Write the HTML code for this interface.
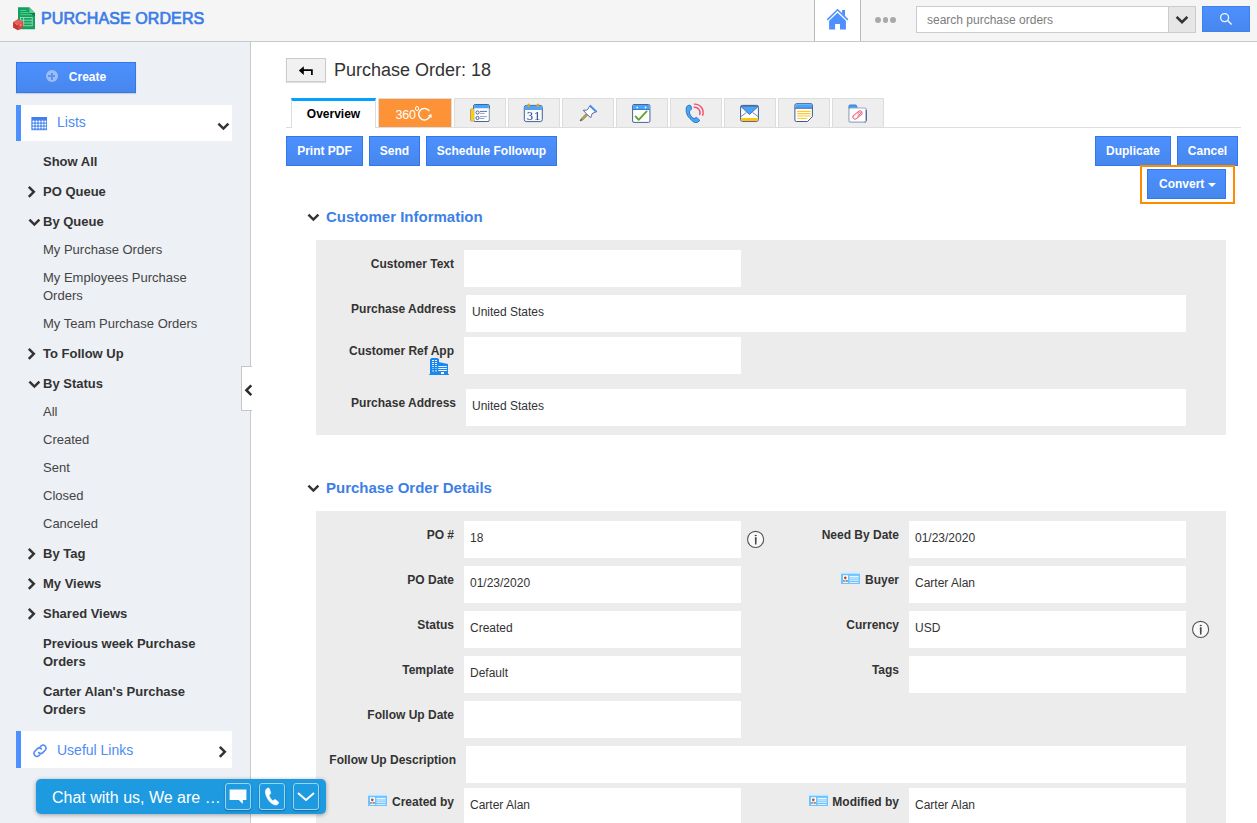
<!DOCTYPE html>
<html><head><meta charset="utf-8"><title>Purchase Orders</title>
<style>
*{box-sizing:border-box;margin:0;padding:0}
html,body{width:1257px;height:823px;overflow:hidden;background:#fff}
body{font-family:"Liberation Sans",sans-serif;font-size:13px;color:#333;position:relative}
.abs{position:absolute}
#hdr{position:absolute;left:0;top:0;width:1257px;height:42px;background:#f5f5f5;border-bottom:1px solid #c8c8c8}
#side{position:absolute;left:0;top:42px;width:251px;height:781px;background:#edf0f5;border-right:1px solid #c9c9c9}
.btn{position:absolute;height:30px;line-height:28px;color:#fff;font-weight:bold;font-size:12px;text-align:center;background:linear-gradient(#4d90fe,#4787ed);border:1px solid #3079ed;white-space:nowrap}
.nav{position:absolute;left:43px;margin-top:1px;font-size:13px;line-height:18px;color:#444;white-space:nowrap}
.nav.b{font-weight:bold;color:#333}
.panel{position:absolute;left:16px;width:216px;height:36px;background:#fff;border-left:5px solid #4d90fe}
.tab{position:absolute;top:99px;height:29px;width:51px;background:#eee;border:1px solid #ddd;border-bottom:none}
.sec{position:absolute;left:326px;font-size:15px;font-weight:bold;color:#3d7fe6;line-height:18px;white-space:nowrap}
.grey{position:absolute;left:316px;width:910px;background:#ececec}
.inp{position:absolute;background:#fff;height:37px;font-size:12px;color:#333;line-height:14px;padding:10px 0 0 6px;white-space:nowrap}
.lbl{position:absolute;font-size:12px;font-weight:bold;color:#333;text-align:right;line-height:14px;white-space:nowrap}
</style></head><body>
<div id="hdr">
<svg class="abs" style="left:12px;top:6px" width="25" height="26" viewBox="0 0 25 26">
<path d="M6 1.2h11.3l5.7 5.7v16.3H6z" fill="#12a05c"/>
<path d="M17.3 1.2l5.7 5.7h-5.7z" fill="#5fcb9a"/>
<path d="M17.3 6.9h5.7v3.2z" fill="#0b7a45"/>
<path d="M8.3 4.5h6.2M8.3 6.6h8.3M8.3 8.7h11.6" stroke="#5ccf9a" stroke-width="0.9" fill="none"/>
<rect x="8.4" y="11.4" width="11.8" height="8.4" fill="none" stroke="#a9e6c8" stroke-width="0.8"/>
<path d="M8.4 14.2h11.8M8.4 17h11.8M11.6 11.4v8.4" stroke="#a9e6c8" stroke-width="0.8" fill="none"/>
<path d="M1.2 16.200l5-3.200 5 3.200v5.200l-5 2.800-5-2.800z" fill="#d9453d"/>
<path d="M1.2 16.2l5 2.6 5-2.6-5-3.2z" fill="#e3615a"/>
<path d="M6.200 18.800v5.400l-5-2.800v-5.200z" fill="#c8372f"/>
<path d="M3.2 17.4l2.6 1.6M8 18.4l.6 1.6.8-2.2" stroke="#f3b5b1" stroke-width="0.7" fill="none"/>
</svg>
<div class="abs" style="left:41px;top:9px;font-size:16px;line-height:20px;color:#3b7de8;-webkit-text-stroke:0.7px #3b7de8;letter-spacing:0.1px;white-space:nowrap">PURCHASE ORDERS</div>
<div class="abs" style="left:814px;top:0;width:47px;height:41px;background:#fff;border-left:1px solid #bbb;border-right:1px solid #bbb"></div>
<svg class="abs" style="left:826px;top:8px" width="24" height="23" viewBox="0 0 24 23"><path d="M11.560 0.700L22.400 11.300 21.300 12.400 11.560 2.800 1.800 12.400 0.700 11.300z" fill="#4d90fe"/><path d="M16.100 2.100h2.900v6.300l-2.900-2.900z" fill="#4d90fe"/><path d="M3.100 12.700L11.560 4.800 19.900 12.700V21.500H14V15.900H9.100V21.500H3.100z" fill="#4d90fe"/></svg>
<div class="abs" style="left:875.100px;top:17.300px;width:5.500px;height:5.500px;border-radius:3px;background:#a9a9a9"></div>
<div class="abs" style="left:882.600px;top:17.300px;width:5.500px;height:5.500px;border-radius:3px;background:#a9a9a9"></div>
<div class="abs" style="left:890.300px;top:17.300px;width:5.500px;height:5.500px;border-radius:3px;background:#a9a9a9"></div>
<div class="abs" style="left:916px;top:6px;width:253px;height:27px;background:#fff;border:1px solid #ccc;font-size:12px;line-height:27px;color:#7d7d7d;padding-left:10px">search purchase orders</div>
<div class="abs" style="left:1168px;top:6px;width:28px;height:27px;background:#e6e6e6;border:1px solid #ccc"></div>
<svg class="abs" style="left:1175px;top:15px" width="14" height="10" viewBox="0 0 14 10"><path d="M1.6 1.8L7 7.2l5.4-5.4" fill="none" stroke="#333" stroke-width="2.6"/></svg>
<div class="abs" style="left:1202px;top:6px;width:48px;height:26px;background:linear-gradient(#4d90fe,#4787ed);border:1px solid #3f82ee"></div>
<svg class="abs" style="left:1219px;top:12px" width="14" height="14" viewBox="0 0 14 14"><circle cx="5.6" cy="5.6" r="4" fill="none" stroke="#fff" stroke-width="1.3" opacity="0.92"/><path d="M8.6 8.6l4 4" stroke="#fff" stroke-width="1.4" opacity="0.92"/></svg>
</div>
<div id="side">
<div class="btn" style="left:16px;top:20px;width:120px;height:31px;line-height:29px;box-shadow:0 1px 1px rgba(0,0,0,.12)"><span style="display:inline-block;width:12px;height:12px;border-radius:6px;background:#9dbdf7;vertical-align:-1px;margin-right:11px;position:relative"><i style="position:absolute;left:2.500px;top:5px;width:7px;height:2px;background:#5a93f3"></i><i style="position:absolute;left:5px;top:2.500px;width:2px;height:7px;background:#5a93f3"></i></span>Create</div>
<div class="panel" style="top:63px"></div>
<svg class="abs" style="left:31px;top:75px" width="16" height="14" viewBox="0 0 16 14"><rect x="0.400" y="0" width="15.600" height="13.200" fill="#3f80ea"/><rect x="0.900" y="2.800" width="14.600" height="9.900" fill="#5a92ef"/><g stroke="#8db4f5" stroke-width="0.700" fill="none"><path d="M0.900 4.6h14.600" /><path d="M0.900 7.6h14.600" /><path d="M0.900 10.6h14.600" /><path d="M2.5 3v9.500"/><path d="M5.5 3v9.500"/><path d="M8.5 3v9.500"/><path d="M11.5 3v9.500"/><path d="M14.3 3v9.500"/></g><g fill="#fff"><circle cx="2.5" cy="4.6" r="0.950"/><circle cx="5.5" cy="4.6" r="0.950"/><circle cx="8.5" cy="4.6" r="0.950"/><circle cx="11.5" cy="4.6" r="0.950"/><circle cx="14.3" cy="4.6" r="0.950"/><circle cx="2.5" cy="7.6" r="0.950"/><circle cx="5.5" cy="7.6" r="0.950"/><circle cx="8.5" cy="7.6" r="0.950"/><circle cx="11.5" cy="7.6" r="0.950"/><circle cx="14.3" cy="7.6" r="0.950"/><circle cx="2.5" cy="10.6" r="0.950"/><circle cx="5.5" cy="10.6" r="0.950"/><circle cx="8.5" cy="10.6" r="0.950"/><circle cx="11.5" cy="10.6" r="0.950"/><circle cx="14.3" cy="10.6" r="0.950"/></g></svg>
<div class="abs" style="left:57px;top:71px;font-size:14px;line-height:18px;color:#4d8bf5">Lists</div>
<svg class="abs" style="left:217px;top:80px" width="13" height="10" viewBox="0 0 13 10"><path d="M1.4 1.6L6.4 6.6 11.4 1.6" fill="none" stroke="#333" stroke-width="2.5"/></svg>
<div class="nav b" style="top:110px">Show All</div>
<div class="nav b" style="top:140px">PO Queue</div>
<svg class="abs" style="left:27px;top:143px" width="10" height="14" viewBox="0 0 10 14"><path d="M1.8 1.8L6.8 6.8 1.8 11.8" fill="none" stroke="#333" stroke-width="2.5"/></svg>
<div class="nav b" style="top:170px">By Queue</div>
<svg class="abs" style="left:28px;top:176px" width="13" height="10" viewBox="0 0 13 10"><path d="M1.4 1.6L6.4 6.6 11.4 1.6" fill="none" stroke="#333" stroke-width="2.5"/></svg>
<div class="nav" style="top:198px">My Purchase Orders</div>
<div class="nav" style="top:226px">My Employees Purchase<br>Orders</div>
<div class="nav" style="top:272px">My Team Purchase Orders</div>
<div class="nav b" style="top:302px">To Follow Up</div>
<svg class="abs" style="left:27px;top:305px" width="10" height="14" viewBox="0 0 10 14"><path d="M1.8 1.8L6.8 6.8 1.8 11.8" fill="none" stroke="#333" stroke-width="2.5"/></svg>
<div class="nav b" style="top:332px">By Status</div>
<svg class="abs" style="left:28px;top:338px" width="13" height="10" viewBox="0 0 13 10"><path d="M1.4 1.6L6.4 6.6 11.4 1.6" fill="none" stroke="#333" stroke-width="2.5"/></svg>
<div class="nav" style="top:360px">All</div>
<div class="nav" style="top:388px">Created</div>
<div class="nav" style="top:416px">Sent</div>
<div class="nav" style="top:444px">Closed</div>
<div class="nav" style="top:472px">Canceled</div>
<div class="nav b" style="top:502px">By Tag</div>
<svg class="abs" style="left:27px;top:505px" width="10" height="14" viewBox="0 0 10 14"><path d="M1.8 1.8L6.8 6.8 1.8 11.8" fill="none" stroke="#333" stroke-width="2.5"/></svg>
<div class="nav b" style="top:532px">My Views</div>
<svg class="abs" style="left:27px;top:535px" width="10" height="14" viewBox="0 0 10 14"><path d="M1.8 1.8L6.8 6.8 1.8 11.8" fill="none" stroke="#333" stroke-width="2.5"/></svg>
<div class="nav b" style="top:562px">Shared Views</div>
<svg class="abs" style="left:27px;top:565px" width="10" height="14" viewBox="0 0 10 14"><path d="M1.8 1.8L6.8 6.8 1.8 11.8" fill="none" stroke="#333" stroke-width="2.5"/></svg>
<div class="nav b" style="top:592px">Previous week Purchase<br>Orders</div>
<div class="nav b" style="top:640px">Carter Alan's Purchase<br>Orders</div>
<div class="panel" style="top:689px;height:37px"></div>
<svg class="abs" style="left:32px;top:701px" width="16" height="15" viewBox="0 0 16 15"><g fill="none" stroke="#4d8bf5" stroke-width="1.5" stroke-linecap="round"><path d="M6.6 9.6a3 3 0 0 0 4.2 0l2.6-2.6a3 3 0 0 0-4.2-4.2l-1 1"/><path d="M9.4 5.9a3 3 0 0 0-4.2 0L2.6 8.5a3 3 0 0 0 4.2 4.2l1-1"/></g></svg>
<div class="abs" style="left:57px;top:699px;font-size:14px;line-height:18px;color:#4d8bf5">Useful Links</div>
<svg class="abs" style="left:218px;top:703px" width="10" height="14" viewBox="0 0 10 14"><path d="M1.8 1.8L6.8 6.8 1.8 11.8" fill="none" stroke="#333" stroke-width="2.5"/></svg>
</div>
<div id="main">
<div class="abs" style="left:286px;top:58px;width:40px;height:24px;background:#f1f1f1;border:1px solid #ccc;box-shadow:0 1px 1px rgba(0,0,0,.12)"></div>
<svg class="abs" style="left:298px;top:64px" width="16" height="13" viewBox="0 0 16 13"><path d="M4.500 6.200h9.400v4.800" fill="none" stroke="#000" stroke-width="1.700"/><path d="M5.800 2.200L0.800 6.600 5.800 11z" fill="#000"/></svg>
<div class="abs" style="left:334px;top:59px;font-size:18px;line-height:22px;color:#333;white-space:nowrap">Purchase Order: 18</div>
<div class="abs" style="left:286px;top:127px;width:955px;height:1px;background:#ddd"></div>
<div class="abs" style="left:291px;top:98px;width:85px;height:30px;background:#fff;border:1px solid #ddd;border-top:3px solid #02a3fe;border-bottom:none;font-size:12px;font-weight:bold;color:#000;text-align:center;line-height:27px">Overview</div>
<div class="abs" style="left:378px;top:98px;width:74px;height:29px;background:#fd9336;border:1px solid #ddd;border-bottom:none"></div>
<div class="abs" style="left:395.500px;top:107px;font-size:12.500px;line-height:16px;color:#fff;letter-spacing:-0.250px">360</div>
<div class="abs" style="left:414.500px;top:106.400px;width:4.200px;height:4.200px;border:1.100px solid #fff;border-radius:2.100px"></div>
<svg class="abs" style="left:418px;top:107px" width="16" height="15" viewBox="0 0 16 15"><path d="M11.420 4.130A5.800 5.800 0 1 0 12.170 8.400" fill="none" stroke="#fff" stroke-width="1.450"/><path d="M9.900 8.500L13.500 7.100 13.800 10.900z" fill="#fff"/></svg>
<div class="tab" style="left:454px;top:98px;width:52px;height:29px"></div>
<svg class="abs" style="left:470px;top:103px" width="21" height="20" viewBox="0 0 21 20"><rect x="3.600" y="1.500" width="15.800" height="17" rx="1.500" fill="#fff" stroke="#4a6296" stroke-width="1"/><path d="M19.400 5.500v12" stroke="#9aa9c4" stroke-width="1"/><path d="M4.100 3a1 1 0 0 1 1-1h12.800a1 1 0 0 1 1 1v2.200H4.100z" fill="#45a5fc"/><rect x="0.500" y="5.900" width="3.300" height="12.200" rx="0.900" fill="#ffcc0d" stroke="#4a6296" stroke-width="0.500"/><rect x="0.900" y="6.100" width="3.100" height="11.800" rx="0.700" fill="#ffcc0d"/><circle cx="7.500" cy="9.500" r="1.600" fill="#fff" stroke="#4a6296" stroke-width="1"/><circle cx="7.500" cy="15" r="1.600" fill="#fff" stroke="#4a6296" stroke-width="1"/><path d="M9.900 8.400h7.100" stroke="#4a6296" stroke-width="0.900"/><path d="M9.900 10.400h4.700M9.900 13.600h7.100M9.900 15.500h4.400" stroke="#8a9bbd" stroke-width="0.900"/></svg>
<div class="tab" style="left:508px;top:98px;width:52px;height:29px"></div>
<svg class="abs" style="left:523px;top:103px;will-change:transform" width="21" height="20" viewBox="0 0 21 20"><rect x="1.300" y="2.400" width="18" height="16.200" rx="2" fill="#f6f8fb" stroke="#41619e" stroke-width="1"/><path d="M1.800 4.400a1.600 1.600 0 0 1 1.600-1.600h13.800a1.600 1.600 0 0 1 1.600 1.600v2.600h-17z" fill="#4da3f7"/><ellipse cx="5.700" cy="2.400" rx="1.300" ry="1.900" fill="#d9a520"/><ellipse cx="14.900" cy="2.400" rx="1.300" ry="1.900" fill="#d9a520"/><text x="11.200" y="16.500" text-anchor="middle" font-family="Liberation Serif" font-size="12" fill="#344f8c" stroke="#344f8c" stroke-width="0.150" letter-spacing="1.300">31</text></svg>
<div class="tab" style="left:562px;top:98px;width:52px;height:29px"></div>
<svg class="abs" style="left:579px;top:104px" width="20" height="19" viewBox="0 0 20 19"><path d="M1 17l1.400-2.600 5.400-5.400 1.500 1.500-5.500 5.400z" fill="#d9a520" stroke="#3f5b94" stroke-width="0.600" stroke-linejoin="round"/><path d="M1 17l1.100-2 .9.900z" fill="#2f4577"/><path d="M11.400 1.200L17.900 7.500 15.200 8.600 13 9.700 12.700 11.200 11.750 13.700 8.900 11.200 7.300 9.600 4.200 6.300 7.600 6.100 9.200 4.850 9.850 3.300z" fill="#fff" stroke="#3f5b94" stroke-width="0.900" stroke-linejoin="round"/><path d="M11.400 1.500L17.400 7.300 16 7.900 10.700 2.700z" fill="#2f8ef5"/></svg>
<div class="tab" style="left:616px;top:98px;width:52px;height:29px"></div>
<svg class="abs" style="left:631px;top:103px" width="21" height="21" viewBox="0 0 21 21"><rect x="1.600" y="1.500" width="17.300" height="17.900" rx="1.400" fill="#fff" stroke="#4a6296" stroke-width="1"/><path d="M18.900 7.500v10.500" stroke="#9aa9c4" stroke-width="1"/><path d="M2.100 3a1 1 0 0 1 1-1h14.300a1 1 0 0 1 1 1v3.300H2.100z" fill="#45a5fc"/><path d="M1.600 6.500h17.300" stroke="#2f6fb8" stroke-width="0.900"/><circle cx="6.200" cy="4.400" r="0.850" fill="#fff"/><circle cx="14.500" cy="4.400" r="0.850" fill="#fff"/><path d="M4.600 13.400L7.700 16.800 15.600 8.400" fill="none" stroke="#5aa82a" stroke-width="1.900" stroke-linecap="round" stroke-linejoin="round"/></svg>
<div class="tab" style="left:670px;top:98px;width:52px;height:29px"></div>
<svg class="abs" style="left:682px;top:100px" width="28" height="26" viewBox="0 0 28 26"><path d="M7.300 5.200C5.600 5.400 4.400 6.600 4.300 8c-.3 1.600-.2 3.200.1 4.600.4 1.600 1 3 1.900 4.150 1 1.300 2 2.400 3.200 3.450 1 .8 1.900 1.600 2.800 2.200h3.200l2.400-2-3.400-3-2.500 1.200c-.8-.4-1.600-.9-2.200-1.500-1-1.100-1.800-2.400-2.200-3.800-.1-.8-.2-1.500-.2-2.200l2.100-1.900-.3-2.900c-.4-.8-1-1.100-1.900-1.100z" fill="#40a8ff" stroke="#2c5c9e" stroke-width="0.800" stroke-linejoin="round"/><path d="M11.660 7.280A5.400 5.400 0 0 1 17.500 14.900" fill="none" stroke="#f0506e" stroke-width="1.400"/><path d="M11.860 4.130A8.500 8.500 0 0 1 20.500 15.800" fill="none" stroke="#f0506e" stroke-width="1.400"/></svg>
<div class="tab" style="left:724px;top:98px;width:52px;height:29px"></div>
<svg class="abs" style="left:739px;top:104px" width="21" height="19" viewBox="0 0 21 19"><rect x="1.600" y="1.400" width="17.800" height="16" rx="1.800" fill="#fff" stroke="#3a5a92" stroke-width="1"/><rect x="2.100" y="13.900" width="16.800" height="3" rx="0.800" fill="#ffc60a"/><path d="M7.400 8.600L1.900 12.500M13.600 8.600L19.100 12.500" stroke="#4a6aa0" stroke-width="0.800"/><path d="M1.800 2.400h17.400L10.500 10.500z" fill="#45a5fc" stroke="#3a5a92" stroke-width="0.800" stroke-linejoin="round"/></svg>
<div class="tab" style="left:778px;top:98px;width:52px;height:29px"></div>
<svg class="abs" style="left:794px;top:102px" width="20" height="21" viewBox="0 0 20 21"><path d="M0.900 3.200a1.500 1.500 0 0 1 1.500-1.500h14.500a1.500 1.500 0 0 1 1.500 1.500V14.600L13.500 19.500H2.400a1.500 1.500 0 0 1-1.500-1.500z" fill="#fff" stroke="#3a5a92" stroke-width="1"/><path d="M1.400 3.200a1 1 0 0 1 1-1h14.500a1 1 0 0 1 1 1V6H1.400z" fill="#45a5fc"/><path d="M1 6.300h17.300" stroke="#3a5a92" stroke-width="0.900"/><path d="M3.100 9.400h13.600M3.100 11.600h13.600" stroke="#ffc933" stroke-width="1.100"/><path d="M3.100 13.900h13.600" stroke="#ffe28f" stroke-width="2.200"/><path d="M3.100 16.500h9.900" stroke="#ffc933" stroke-width="1.100"/></svg>
<div class="tab" style="left:832px;top:98px;width:52px;height:29px"></div>
<svg class="abs" style="left:847px;top:103px" width="21" height="21" viewBox="0 0 21 21"><path d="M1.900 6V3.200a1.300 1.300 0 0 1 1.300-1.300h5.200a1.300 1.300 0 0 1 1.200.9l.6 2.400z" fill="#3d9df8" stroke="#2d6cc0" stroke-width="0.700"/><rect x="1.900" y="5" width="17.400" height="14.100" rx="1.700" fill="#fff" stroke="#9aa9c4" stroke-width="1.200"/><path d="M19.300 7v10.800" stroke="#4a6296" stroke-width="1.200"/><path d="M17.600 19.100h.9" stroke="#5a70a0" stroke-width="1.200"/><g transform="translate(10.500 12) rotate(-38)" fill="none" stroke="#ee5d78" stroke-width="0.950" stroke-linecap="round"><path d="M3.100 -2.100H-3.100a2.100 2.100 0 0 0 0 4.200H3.100a2.100 2.100 0 0 0 0-4.200z"/><path d="M-0.300 0.800H3.100a0.800 0.800 0 0 0 0-1.600H1.200" stroke-width="0.900"/></g></svg>
<div class="btn" style="left:286px;top:136px;width:77px">Print PDF</div>
<div class="btn" style="left:369px;top:136px;width:51px">Send</div>
<div class="btn" style="left:426px;top:136px;width:131px">Schedule Followup</div>
<div class="btn" style="left:1095px;top:136px;width:76px">Duplicate</div>
<div class="btn" style="left:1177px;top:136px;width:61px">Cancel</div>
<div class="abs" style="left:1140px;top:165px;width:95px;height:39px;border:2px solid #ff8c00;background:#fff"></div>
<div class="btn" style="left:1147px;top:169px;width:79px;text-align:left;padding-left:11px">Convert</div>
<div class="abs" style="left:1208px;top:183px;width:0;height:0;border-left:4px solid transparent;border-right:4px solid transparent;border-top:4px solid #fff"></div>
<svg class="abs" style="left:307px;top:213px" width="13" height="10" viewBox="0 0 13 10"><path d="M1.4 1.6L6.4 6.6 11.4 1.6" fill="none" stroke="#333" stroke-width="2.5"/></svg>
<div class="sec" style="top:208px">Customer Information</div>
<div class="grey" style="top:240px;height:195px"></div>
<div class="inp" style="left:464px;top:250px;width:277px"></div>
<div class="lbl" style="left:254px;width:200px;top:257px">Customer Text</div>
<div class="inp" style="left:466px;top:295px;width:720px">United States</div>
<div class="lbl" style="left:256px;width:200px;top:302px">Purchase Address</div>
<div class="inp" style="left:464px;top:337px;width:277px"></div>
<div class="lbl" style="left:254px;width:200px;top:344px">Customer Ref App</div>
<svg class="abs" style="left:429px;top:357px" width="20" height="19" viewBox="0 0 20 19" shape-rendering="auto"><path d="M1 2.300L2.600 1h5.800L10 2.300V18H1z" fill="#1a86ef"/><path d="M8.300 4.800L19 7.100V18H8.300z" fill="#1a86ef"/><rect x="0.200" y="17" width="19.700" height="1" fill="#1a86ef"/><g fill="#fff"><rect x="3" y="3" width="2" height="1" opacity="1"/><rect x="3" y="5" width="2" height="1" opacity="1"/><rect x="3" y="7" width="2" height="1" opacity="1"/><rect x="6" y="3" width="2" height="1" opacity="1"/><rect x="6" y="5" width="2" height="1" opacity="1"/><rect x="6" y="7" width="2" height="1" opacity="1"/><rect x="3" y="9" width="2" height="1" opacity="0.7"/><rect x="6" y="9" width="2" height="1" opacity="0.7"/><rect x="3" y="11" width="2" height="1" opacity="0.45"/><rect x="3" y="13" width="2" height="1" opacity="0.45"/><rect x="6" y="11" width="2" height="1" opacity="0.45"/><rect x="6" y="13" width="2" height="1" opacity="0.45"/><rect x="3.5" y="14" width="1.5" height="1" opacity="0.5"/><rect x="6.5" y="14" width="1.5" height="1" opacity="0.5"/><rect x="9.3" y="9" width="8.6" height="1" opacity="0.92"/><rect x="9.3" y="11" width="8.6" height="1" opacity="0.92"/><rect x="9.3" y="13" width="8.6" height="1" opacity="0.92"/><rect x="12" y="15" width="3" height="2"/></g></svg>
<div class="inp" style="left:466px;top:389px;width:720px">United States</div>
<div class="lbl" style="left:256px;width:200px;top:396px">Purchase Address</div>
<svg class="abs" style="left:307px;top:484px" width="13" height="10" viewBox="0 0 13 10"><path d="M1.4 1.6L6.4 6.6 11.4 1.6" fill="none" stroke="#333" stroke-width="2.5"/></svg>
<div class="sec" style="top:479px">Purchase Order Details</div>
<div class="grey" style="top:511px;height:312px"></div>
<div class="inp" style="left:464px;top:521px;width:277px">18</div>
<div class="lbl" style="left:254px;width:200px;top:528px">PO #</div>
<div class="inp" style="left:464px;top:566px;width:277px">01/23/2020</div>
<div class="lbl" style="left:254px;width:200px;top:573px">PO Date</div>
<div class="inp" style="left:464px;top:611px;width:277px">Created</div>
<div class="lbl" style="left:254px;width:200px;top:618px">Status</div>
<div class="inp" style="left:464px;top:656px;width:277px">Default</div>
<div class="lbl" style="left:254px;width:200px;top:663px">Template</div>
<div class="inp" style="left:464px;top:701px;width:277px"></div>
<div class="lbl" style="left:254px;width:200px;top:708px">Follow Up Date</div>
<div class="inp" style="left:909px;top:521px;width:277px">01/23/2020</div>
<div class="lbl" style="left:699px;width:200px;top:528px">Need By Date</div>
<div class="inp" style="left:909px;top:566px;width:277px">Carter Alan</div>
<div class="lbl" style="left:699px;width:200px;top:573px">Buyer</div>
<div class="inp" style="left:909px;top:611px;width:277px">USD</div>
<div class="lbl" style="left:699px;width:200px;top:618px">Currency</div>
<div class="inp" style="left:909px;top:656px;width:277px"></div>
<div class="lbl" style="left:699px;width:200px;top:663px">Tags</div>
<svg class="abs" style="left:841px;top:571px" width="19" height="13" viewBox="0 0 19 13"><rect x="0" y="0" width="19" height="13" rx="0.6" fill="#6ec3ff"/><rect x="0" y="0" width="19" height="2.700" fill="#dbeefd"/><rect x="2" y="4.300" width="5" height="7.500" fill="#fff"/><circle cx="4.300" cy="6.800" r="1.350" fill="#a5552f"/><rect x="2.100" y="8.900" width="4.800" height="1.900" fill="#8d8d8d"/><rect x="3.700" y="8.300" width="1.300" height="2.500" fill="#f7b9c3"/><rect x="8.400" y="4.900" width="9.300" height="1" fill="#fff" opacity="0.950"/><rect x="8.400" y="6.200" width="9.300" height="2.400" fill="#b7e0fe"/><rect x="8.400" y="9" width="9.300" height="0.900" fill="#d6edfe"/><rect x="8.400" y="11" width="9.300" height="0.900" fill="#e6f4fe"/></svg>
<svg class="abs" style="left:746px;top:530px" width="19" height="19" viewBox="0 0 19 19"><circle cx="9.600" cy="9.400" r="8.050" fill="#fafafa" stroke="#555" stroke-width="1.100"/><path d="M8.800 7.300h1.900l-.2 6.600a.75.75 0 0 1-1.500 0z" fill="#4a4a4a"/><ellipse cx="9.750" cy="5.500" rx="1.150" ry="0.700" fill="#4a4a4a"/></svg>
<svg class="abs" style="left:1191px;top:620px" width="19" height="19" viewBox="0 0 19 19"><circle cx="9.600" cy="9.400" r="8.050" fill="#fafafa" stroke="#555" stroke-width="1.100"/><path d="M8.800 7.300h1.900l-.2 6.600a.75.75 0 0 1-1.500 0z" fill="#4a4a4a"/><ellipse cx="9.750" cy="5.500" rx="1.150" ry="0.700" fill="#4a4a4a"/></svg>
<div class="inp" style="left:466px;top:746px;width:720px"></div>
<div class="lbl" style="left:256px;width:200px;top:753px">Follow Up Description</div>
<div class="inp" style="left:464px;top:788px;width:277px">Carter Alan</div>
<div class="lbl" style="left:254px;width:200px;top:795px">Created by</div>
<svg class="abs" style="left:368px;top:793px" width="19" height="13" viewBox="0 0 19 13"><rect x="0" y="0" width="19" height="13" rx="0.6" fill="#6ec3ff"/><rect x="0" y="0" width="19" height="2.700" fill="#dbeefd"/><rect x="2" y="4.300" width="5" height="7.500" fill="#fff"/><circle cx="4.300" cy="6.800" r="1.350" fill="#a5552f"/><rect x="2.100" y="8.900" width="4.800" height="1.900" fill="#8d8d8d"/><rect x="3.700" y="8.300" width="1.300" height="2.500" fill="#f7b9c3"/><rect x="8.400" y="4.900" width="9.300" height="1" fill="#fff" opacity="0.950"/><rect x="8.400" y="6.200" width="9.300" height="2.400" fill="#b7e0fe"/><rect x="8.400" y="9" width="9.300" height="0.900" fill="#d6edfe"/><rect x="8.400" y="11" width="9.300" height="0.900" fill="#e6f4fe"/></svg>
<div class="inp" style="left:909px;top:788px;width:277px">Carter Alan</div>
<div class="lbl" style="left:699px;width:200px;top:795px">Modified by</div>
<svg class="abs" style="left:809px;top:793px" width="19" height="13" viewBox="0 0 19 13"><rect x="0" y="0" width="19" height="13" rx="0.6" fill="#6ec3ff"/><rect x="0" y="0" width="19" height="2.700" fill="#dbeefd"/><rect x="2" y="4.300" width="5" height="7.500" fill="#fff"/><circle cx="4.300" cy="6.800" r="1.350" fill="#a5552f"/><rect x="2.100" y="8.900" width="4.800" height="1.900" fill="#8d8d8d"/><rect x="3.700" y="8.300" width="1.300" height="2.500" fill="#f7b9c3"/><rect x="8.400" y="4.900" width="9.300" height="1" fill="#fff" opacity="0.950"/><rect x="8.400" y="6.200" width="9.300" height="2.400" fill="#b7e0fe"/><rect x="8.400" y="9" width="9.300" height="0.900" fill="#d6edfe"/><rect x="8.400" y="11" width="9.300" height="0.900" fill="#e6f4fe"/></svg>
<div class="abs" style="left:241px;top:366px;width:11px;height:45px;background:#fff;border:1px solid #c6c6c6;border-right:none"></div>
<svg class="abs" style="left:243px;top:383px" width="10" height="14" viewBox="0 0 10 14"><path d="M8.300 2.300L3.400 7.200 8.300 12.100" fill="none" stroke="#2b2b2b" stroke-width="2.500"/></svg>
<div class="abs" style="left:36px;top:779px;width:290px;height:35px;background:#1e9ae0;border-radius:5px;box-shadow:0 1px 4px rgba(0,0,0,.35)"></div>
<div class="abs" style="left:52px;top:787px;font-size:16px;line-height:22px;color:#fff;white-space:nowrap">Chat with us, We are …</div>
<div class="abs" style="left:225px;top:783px;width:26px;height:27px;border:1px solid #9fd3f3;border-radius:3px;background:#1e9ae0;box-shadow:0 1px 2px rgba(0,0,0,.3)"></div>
<svg class="abs" style="left:229px;top:789px" width="18" height="16" viewBox="0 0 18 16"><path d="M0.600 0.600h16.800v10.400h-3.600v4l-4-4h-9.200z" fill="#fff"/></svg>
<div class="abs" style="left:259px;top:783px;width:26px;height:27px;border:1px solid #9fd3f3;border-radius:3px;background:#1e9ae0;box-shadow:0 1px 2px rgba(0,0,0,.3)"></div>
<svg class="abs" style="left:264px;top:787px" width="17" height="19" viewBox="0 0 17 19"><path d="M4 1c-1.600.4-2.800 2-2.600 4.200.6 5.200 3.800 10 8.400 12.400 1.800.8 3.600.2 4.600-1.200.4-.8.200-1.400-.4-1.800l-2.400-1.800c-.7-.5-1.300-.3-1.800.2l-.8.900c-2-1.400-3.400-3.600-4-6l1-.6c.7-.4.800-1.100.6-1.800l-1-3.200c-.2-.8-.8-1.500-1.600-1.300z" fill="#fff" stroke="#fff" stroke-width="0.600" stroke-linejoin="round"/></svg>
<div class="abs" style="left:293px;top:783px;width:26px;height:27px;border:1px solid #9fd3f3;border-radius:3px;background:#1e9ae0;box-shadow:0 1px 2px rgba(0,0,0,.3)"></div>
<svg class="abs" style="left:297px;top:791px" width="18" height="12" viewBox="0 0 18 12"><path d="M1 2l8 7 8-7" fill="none" stroke="#fff" stroke-width="2"/></svg>
</div>
</body></html>
